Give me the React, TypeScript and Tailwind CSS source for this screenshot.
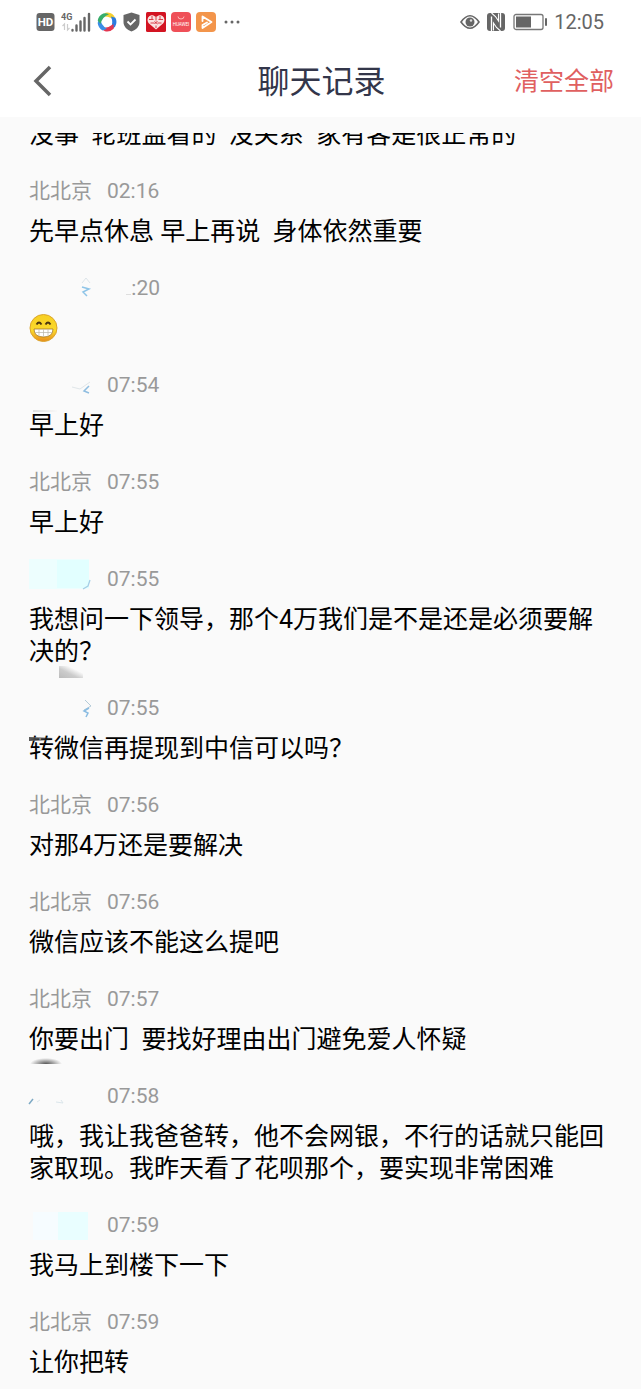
import React from 'react';

type Mask = 'tip' | 'wing' | 'cyan' | 'bolt' | 'specks' | 'block';

interface Message {
  id: number;
  name?: string;
  mask?: Mask;
  time: string;
  text?: string;
  smudge?: 'top' | 'dark' | 'corner' | 'oval';
}

const messages: Message[] = [
  { id: 1, name: '北北京', time: '02:16', text: '先早点休息 早上再说  身体依然重要' },
  { id: 2, mask: 'tip', time: ':20' },
  { id: 3, mask: 'wing', time: '07:54', text: '早上好', smudge: 'top' },
  { id: 4, name: '北北京', time: '07:55', text: '早上好' },
  { id: 5, mask: 'cyan', time: '07:55', text: '我想问一下领导，那个4万我们是不是还是必须要解决的？', smudge: 'corner' },
  { id: 6, mask: 'bolt', time: '07:55', text: '转微信再提现到中信可以吗？', smudge: 'dark' },
  { id: 7, name: '北北京', time: '07:56', text: '对那4万还是要解决' },
  { id: 8, name: '北北京', time: '07:56', text: '微信应该不能这么提吧' },
  { id: 9, name: '北北京', time: '07:57', text: '你要出门  要找好理由出门避免爱人怀疑', smudge: 'oval' },
  { id: 10, mask: 'specks', time: '07:58', text: '哦，我让我爸爸转，他不会网银，不行的话就只能回家取现。我昨天看了花呗那个，要实现非常困难' },
  { id: 11, mask: 'block', time: '07:59', text: '我马上到楼下一下' },
  { id: 12, name: '北北京', time: '07:59', text: '让你把转' },
];

const blades = ['#f5cf2e', '#2b7be0', '#e3364f', '#3b8de6', '#38ad6b'];

const StatusBar: React.FC = () => (
  <div className="flex h-11 items-center justify-between pl-9 pr-[37px] text-[#666]">
    <div className="flex items-center gap-[6px]">
      <svg width="19" height="20" viewBox="0 0 19 20">
        <rect x="0.5" y="1" width="18" height="18" rx="3" fill="#666" />
        <text x="9.5" y="14.2" textAnchor="middle" fontSize="11.5" fontWeight="700" fill="#fff" fontFamily="Roboto, sans-serif">HD</text>
      </svg>
      <svg width="30" height="20" viewBox="0 0 30 20">
        <text x="0" y="8" fontSize="9" fontWeight="700" fill="#666" fontFamily="Roboto, sans-serif">4G</text>
        <path d="M3.5 18v-6l-2 2M6.5 12v6l2-2" stroke="#ccc" strokeWidth="1.2" fill="none" />
        <path d="M11.5 18.500v-.5M15.500 18.500v-5M19.500 18.500v-9M23.500 18.500V6M28 18.500V2" stroke="#666" strokeWidth="2.400" strokeLinecap="round" />
      </svg>
      <svg width="20" height="20" viewBox="0 0 20 20">
        {blades.map((color, i) => (
          <path
            key={color}
            d="M8.500.7A9.400 9.400 0 0 1 17 3.800Q18.500 6 18 9.500Q14 4 6 4.500Z"
            fill={color}
            transform={`rotate(${i * 72} 10 10)`}
          />
        ))}
      </svg>
      <svg width="17" height="20" viewBox="0 0 17 20">
        <path d="M8.500.5 16.500 3v7c0 4.500-3.500 8-8 9.500C4 18 .5 14.500.5 10V3Z" fill="#666" />
        <path d="m4.500 9.500 3 3 5-5" stroke="#fff" strokeWidth="1.800" fill="none" />
      </svg>
      <div className="flex gap-[5px]">
        <svg width="20" height="20" viewBox="0 0 20 20">
          <rect width="20" height="20" rx="1.500" fill="#d31422" />
          <path d="M10 17.500 3 11.500C-.5 7.500 3 2 7.500 3.500L10 5l2.500-1.500C17 2 20.500 7.500 17 11.500Z" fill="#f9e3e1" />
          <path d="M3 7.500h4.500M12.500 7.500H17M4.500 11h4M11.500 11h4M6 4v3M14 4v3M10 5v3.500M8.500 9.500l3 2.500M11.500 9l-3 3M10 13.500V16" stroke="#d31422" strokeWidth="0.800" />
        </svg>
        <svg width="20" height="20" viewBox="0 0 20 20">
          <rect width="20" height="20" rx="4" fill="#ef5058" />
          <path d="M7 4.500a3 2.500 0 0 0 6 0" stroke="#fbb" strokeWidth="1" fill="none" />
          <text x="10" y="13.500" textAnchor="middle" fontSize="4.500" fill="#fff" fontFamily="Roboto, sans-serif">HUAWEI</text>
        </svg>
        <svg width="20" height="20" viewBox="0 0 20 20">
          <rect width="20" height="20" rx="4" fill="#f3954b" />
          <path d="M6.500 9V4.500L15.500 10l-9 6v-3L11 10.500" stroke="#fff" strokeWidth="1.800" strokeLinejoin="round" strokeLinecap="round" fill="none" />
        </svg>
      </div>
      <svg width="20" height="20" viewBox="0 0 20 20" fill="#666">
        <circle cx="4" cy="10" r="1.500" />
        <circle cx="10" cy="10" r="1.500" />
        <circle cx="16" cy="10" r="1.500" />
      </svg>
    </div>
    <div className="flex items-center gap-[6px]">
      <svg width="20" height="20" viewBox="0 0 20 20" fill="none" stroke="#666">
        <path d="M1 10Q10-2.500 19 10 10 22.500 1 10Z" strokeWidth="1.600" />
        <circle cx="10" cy="10" r="4.500" fill="#666" stroke="none" />
        <circle cx="11" cy="8.500" r="1.200" fill="#ddd" stroke="none" />
      </svg>
      <svg width="20" height="20" viewBox="0 0 20 20">
        <path d="M4 1h12q3 0 3 3v12q0 3-3 3H4q-3 0-3-3V4q0-3 3-3Z" fill="#666" />
        <path d="M5.500 19V4.500M14.500 1v14.500" stroke="#fff" strokeWidth="1.300" />
        <path d="m5.500 1 4 3.500 3 4.500V1.500M14.500 19l-4-3.500-3-4.500v7.500" stroke="#fff" strokeWidth="1.100" fill="none" />
      </svg>
      <svg width="36" height="18" viewBox="0 0 36 18">
        <rect x="2" y="1.500" width="29" height="15" rx="2" fill="none" stroke="#777" strokeWidth="1.300" />
        <rect x="4" y="3.500" width="15" height="11" fill="#666" />
        <rect x="33" y="5" width="2" height="8" rx="1" fill="#666" />
      </svg>
      <span className="font-[Roboto,sans-serif] text-[20px] leading-6">12:05</span>
    </div>
  </div>
);

const MaskedName: React.FC<{ mask: Mask }> = ({ mask }) => (
  <svg width="63" height="32" viewBox="0 0 63 32" className="overflow-visible" fill="none" aria-hidden="true">
    {mask === 'tip' && (
      <>
        <path d="m53 11 4-5 4 5" stroke="#dde5ea" />
        <path d="m53 15 7 2-6 3 4 4" stroke="#8fc5e8" strokeWidth="1.500" />
        <path d="M97 22.500h5" stroke="#dedede" />
      </>
    )}
    {mask === 'wing' && (
      <>
        <path d="m43 18 8 2 10-7" stroke="#e0e6e9" />
        <path d="m60 17-5 5 5 2" stroke="#8fbde0" strokeWidth="1.500" />
      </>
    )}
    {mask === 'cyan' && (
      <>
        <path d="M0-4h60v30H0Z" fill="#edfefe" />
        <path d="M28-3h32v28H28Z" fill="#e2ffff" />
        <path d="m61 17-2 6-5 3" stroke="#a5cfe6" strokeWidth="1.300" />
      </>
    )}
    {mask === 'bolt' && (
      <>
        <path d="m56 8 6 6-7 4" stroke="#b4cbd8" />
        <path d="m60 16-5 3 4 2-2 4" stroke="#8abce2" strokeWidth="1.500" />
      </>
    )}
    {mask === 'specks' && (
      <>
        <path d="m0 24 4-5" stroke="#7da9c4" strokeWidth="1.500" />
        <path d="m8 22 3-2M27 22l7 1-2-3" stroke="#dbe6eb" />
      </>
    )}
    {mask === 'block' && (
      <>
        <path d="M4 3h25v28H4Z" fill="#f6fcff" />
        <path d="M29 3h30v28H29Z" fill="#e9feff" />
      </>
    )}
  </svg>
);

const GrinEmoji: React.FC = () => (
  <svg width="29" height="30" viewBox="0 0 29 29" role="img" aria-label="😁">
    <defs>
      <linearGradient id="face" x1="0" y1="0" x2="0" y2="1">
        <stop offset="0" stopColor="#f7cf22" />
        <stop offset="0.6" stopColor="#fbd92c" />
        <stop offset="1" stopColor="#e88a1c" />
      </linearGradient>
    </defs>
    <circle cx="14.500" cy="14.500" r="13.500" fill="url(#face)" stroke="#dba52c" />
    <path d="M7.500 11q2.500-4 5 0M16.500 11q2.500-4 5 0" stroke="#4b3510" strokeWidth="1.800" fill="none" />
    <path d="M5 15.500h19q0 8-9.500 8T5 15.500Z" fill="#fff" stroke="#a77925" strokeWidth="0.800" />
    <path d="M6 19h17M10 16v6.500M14.500 16v7.500M19 16v6.500" stroke="#b9b5a7" strokeWidth="0.700" />
  </svg>
);

const MessageItem: React.FC<{ message: Message }> = ({ message }) => (
  <li className="flex flex-col gap-[9px]">
    <div className="flex h-8 items-center text-[21px] leading-8 text-[#999]">
      <span className="w-[78px] shrink-0">
        {message.mask ? <MaskedName mask={message.mask} /> : message.name}
      </span>
      <time className={message.time.length < 5 ? 'w-[53px] text-right' : 'w-[53px]'}>{message.time}</time>
    </div>
    <div className="relative min-h-8">
      {message.text ? <p className="whitespace-pre-wrap">{message.text}</p> : <GrinEmoji />}
      {message.smudge === 'top' && (
        <span className="absolute left-1 top-0 h-0.5 w-6 bg-gradient-to-r from-[#ddd] to-[#f8f8f8]" />
      )}
      {message.smudge === 'dark' && (
        <span className="absolute left-0 top-1 h-1 w-6 bg-gradient-to-r from-[#555] to-transparent" />
      )}
      {message.smudge === 'corner' && (
        <span className="absolute left-[30px] top-full -mt-[2px] h-3 w-6 bg-gradient-to-tr from-[#bbb] via-[#ccc] via-40% to-transparent to-70%" />
      )}
      {message.smudge === 'oval' && (
        <span className="absolute left-0 top-full h-2 w-15 bg-[radial-gradient(ellipse_16px_6px_at_17px_100%,#555,transparent)]" />
      )}
    </div>
  </li>
);

const App: React.FC = () => {
  return (
    <div className="min-h-screen bg-[#fafafa] font-[Roboto,'Noto_Sans_CJK_SC',sans-serif]" lang="zh-CN">
      <header className="bg-white">
        <StatusBar />
        <div className="grid h-[73px] grid-cols-[1fr_auto_1fr] items-center pl-[29px] pr-[27px] pt-[2px]">
          <button type="button" aria-label="返回" className="justify-self-start">
            <svg width="28" height="36" viewBox="0 0 28 36" fill="none">
              <path d="M21 3 7 17l14 14" stroke="#666" strokeWidth="3.500" />
            </svg>
          </button>
          <h1 className="text-[32px] leading-10 text-[#33364a]">聊天记录</h1>
          <button type="button" className="justify-self-end text-[25px] leading-8 text-[#e06060]">清空全部</button>
        </div>
      </header>

      <main className="px-[29px] pt-4 text-[25px] leading-8 text-black">
        {/* 上一条消息，只露出下半部分 */}
        <div className="flex h-[18px] items-end overflow-hidden">
          <p className="whitespace-pre-wrap">没事  轮班监看的  没关系  家有客是很正常的</p>
        </div>
        <ul className="mt-6 flex flex-col gap-6">
          {messages.map((message) => (
            <MessageItem key={message.id} message={message} />
          ))}
        </ul>
      </main>
    </div>
  );
};

export default App;
